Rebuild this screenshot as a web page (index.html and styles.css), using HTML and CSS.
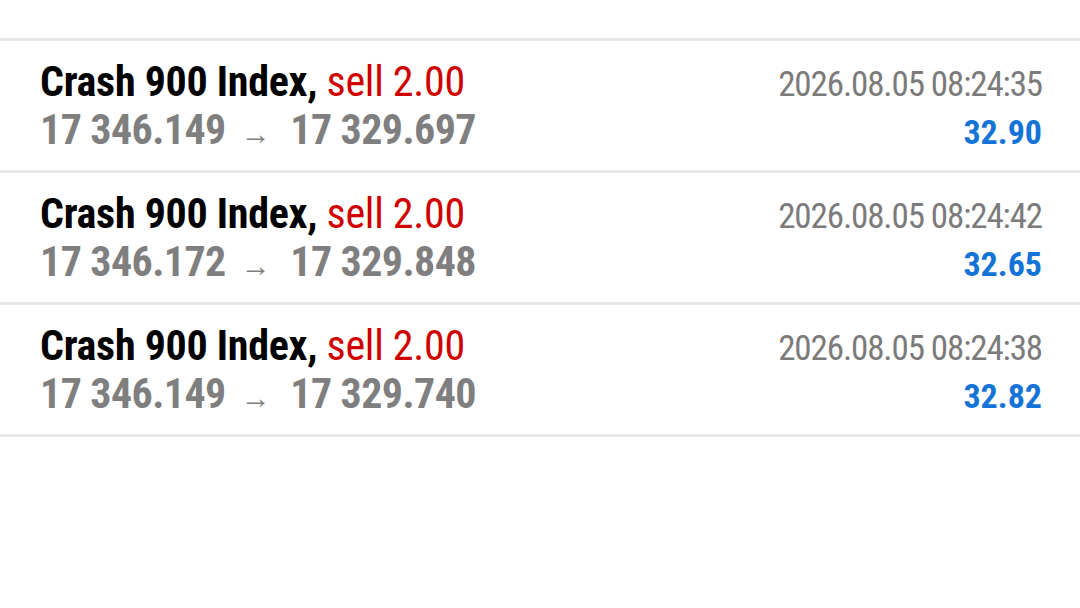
FILE: index.html
```html
<!DOCTYPE html>
<html>
<head>
<meta charset="utf-8">
<title>History</title>
<link rel="stylesheet" href="styles.css">
</head>

<body>

<section class="deals">
  <div class="deal">
    <div class="deal-title">Crash 900 Index, <span class="type-sell">sell 2.00</span></div>
    <div class="deal-time">2026.08.05 08:24:35</div>
    <div class="deal-prices">17 346.149 <span class="arrow">&rarr;</span> 17 329.697</div>
    <div class="deal-profit">32.90</div>
  </div>

  <div class="deal">
    <div class="deal-title">Crash 900 Index, <span class="type-sell">sell 2.00</span></div>
    <div class="deal-time">2026.08.05 08:24:42</div>
    <div class="deal-prices">17 346.172 <span class="arrow">&rarr;</span> 17 329.848</div>
    <div class="deal-profit">32.65</div>
  </div>

  <div class="deal">
    <div class="deal-title">Crash 900 Index, <span class="type-sell">sell 2.00</span></div>
    <div class="deal-time">2026.08.05 08:24:38</div>
    <div class="deal-prices">17 346.149 <span class="arrow">&rarr;</span> 17 329.740</div>
    <div class="deal-profit">32.82</div>
  </div>
</section>

</body>
</html>
```

FILE: styles.css
```css
body {
  background-color: #fff;
  color: #000;
  font-family: Roboto, 'Noto Sans', sans-serif;
  font-stretch: condensed;
  margin: 0;
  overflow: hidden;
  padding: 0;
}

/* List of closed deals */
.deals {
  padding-top: 38px;
}

.deal {
  border-top: 3px solid #e8e8e8;
  box-sizing: border-box;
  display: grid;
  grid-template-columns: 1fr auto;
  grid-template-rows: 48px 48px;
  align-items: baseline;
  height: 132px;
  padding: 17px 38px 0 40px;
}
.deal:last-child {
  border-bottom: 3px solid #e8e8e8;
  height: 135px;
}

.deal-title {
  font-size: 42px;
  font-weight: bold;
  letter-spacing: -0.3px;
  line-height: 48px;
}
.type-sell {
  color: #d00000;
  font-weight: normal;
}

.deal-prices {
  color: #7f7f7f;
  font-size: 42px;
  font-weight: bold;
  letter-spacing: -0.6px;
  line-height: 48px;
}
.arrow {
  font-size: 30px;
  font-weight: normal;
  margin: 0 11px 0 6px;
}

.deal-time {
  color: #7b7b7b;
  font-size: 35px;
  letter-spacing: -1.1px;
  line-height: 48px;
  text-align: right;
}
.deal-profit {
  color: #1473d6;
  font-size: 34px;
  font-weight: bold;
  line-height: 48px;
  text-align: right;
}
```
